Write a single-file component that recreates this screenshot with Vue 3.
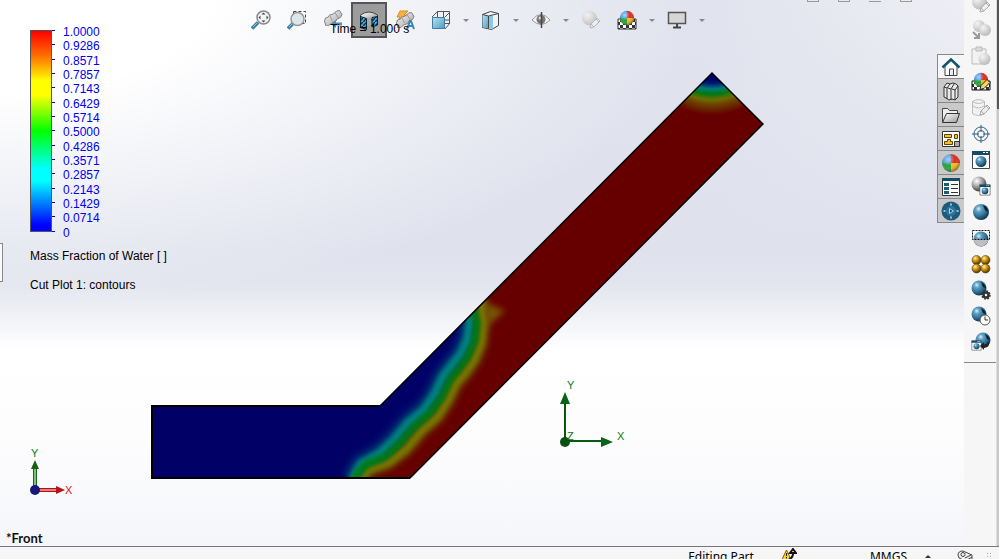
<template>
  <div class="app">
    <svg class="defs" aria-hidden="true">
      <defs>
        <linearGradient id="gSteel" x1="0" y1="0" x2="1" y2="1"><stop offset="0" stop-color="#fff" /><stop offset="1" stop-color="#9a9a9a" /></linearGradient>
        <linearGradient id="gBlue" x1="0" y1="0" x2="1" y2="1"><stop offset="0" stop-color="#b9e2f2" /><stop offset="1" stop-color="#4d9dc0" /></linearGradient>
        <radialGradient id="gBall" cx=".35" cy=".3" r=".75"><stop offset="0" stop-color="#d8f0fa" /><stop offset=".25" stop-color="#5fa0c4" /><stop offset=".65" stop-color="#2b6c92" /><stop offset="1" stop-color="#0c2c40" /></radialGradient>
        <radialGradient id="gGold" cx=".35" cy=".3" r=".75"><stop offset="0" stop-color="#fff3b0" /><stop offset=".4" stop-color="#d29a10" /><stop offset="1" stop-color="#4a2c00" /></radialGradient>
        <radialGradient id="gGrey" cx=".35" cy=".3" r=".8"><stop offset="0" stop-color="#f4f4f4" /><stop offset="1" stop-color="#b4b4b4" /></radialGradient>
        <radialGradient id="gDark" cx=".35" cy=".3" r=".8"><stop offset="0" stop-color="#fff" /><stop offset=".5" stop-color="#999" /><stop offset="1" stop-color="#222" /></radialGradient>
        <radialGradient id="gShine" cx=".35" cy=".3" r=".75"><stop offset="0" stop-color="#fff" stop-opacity=".6" /><stop offset=".5" stop-color="#fff" stop-opacity="0" /><stop offset="1" stop-color="#000" stop-opacity=".5" /></radialGradient>
        <pattern id="hatch" width="4" height="4" patternUnits="userSpaceOnUse"><rect width="4" height="4" fill="#4fa9d2" /><path d="M0 4L4 0" stroke="#063049" stroke-width="1.500" /></pattern>
        <pattern id="check" width="6" height="6" patternUnits="userSpaceOnUse"><rect width="6" height="6" fill="#fff" /><path d="M0 0h3v3H0zM3 3h3v3H3z" fill="#333" /></pattern>
      </defs>

      <symbol id="rgb" viewBox="0 0 20 20">
        <path d="M10 10V1A9 9 0 0 0 1 10z" fill="#3c8be0" /><path d="M10 10V1A9 9 0 0 1 19 10z" fill="#e0281e" />
        <path d="M10 10H1A9 9 0 0 0 10 19z" fill="#26a03a" /><path d="M10 10H19A9 9 0 0 1 10 19z" fill="#f4b91c" />
        <circle cx="10" cy="10" r="9" fill="url(#gShine)" />
      </symbol>
      <symbol id="pencil" viewBox="0 0 12 12">
        <path d="M1 11l1-4 6-6 3 3-6 6zM2 7l3 3M7 2l3 3" fill="#eee" stroke="#aaa" />
      </symbol>
      <symbol id="scope" viewBox="0 0 20 16">
        <path d="M1.500 11l1-3 3-1 1-2 4-1 3-3 3-.5 2.500 4-1.500 3-3.500 1.500-1.500 2.500-4 1.500-2.500 2.500-3 .5z" fill="url(#gSteel)" stroke="#808080" />
        <path d="M6.500 5l3 6M12 2.500l3.500 5.500" stroke="#999" fill="none" />
      </symbol>

      <symbol id="fit" viewBox="0 0 20 20">
        <path d="M1 18.500l6-6" stroke="#3b7fa6" stroke-width="3.500" /><path d="M2 17l4-4" stroke="#8cc4e0" stroke-width="1" />
        <circle cx="12.500" cy="7.500" r="6.500" fill="#f2f4f6" stroke="#8b8b8b" stroke-width="1.500" />
        <path d="M12.500 2.500l2 2h-4zM12.500 12.500l2-2h-4zM7.500 7.500l2-2v4zM17.500 7.500l-2-2v4z" fill="#444" />
      </symbol>
      <symbol id="area" viewBox="0 0 20 20">
        <path d="M6.500 1.500h12v12h-12z" fill="none" stroke="#444" stroke-dasharray="3 2" />
        <path d="M1 18.500l6-6" stroke="#3b7fa6" stroke-width="3.500" /><path d="M2 17l4-4" stroke="#8cc4e0" />
        <circle cx="10.500" cy="9" r="6.500" fill="#dfe6ea" stroke="#999" stroke-width="1.500" />
      </symbol>
      <symbol id="prev" viewBox="0 0 20 20">
        <use href="#scope" width="20" height="16" /><path d="M8 14l5-4v2.500h6v3h-6V18z" fill="#4691b8" />
      </symbol>
      <symbol id="section" viewBox="0 0 20 20">
        <path d="M1.500 7V5q8.500-6 17 0v3l-5 1-2 1H8L7 9z" fill="url(#gSteel)" stroke="#444" />
        <path d="M8 7.500h4v8H8z" fill="#aaa" />
        <path d="M1.500 6.500l6 2v11l-6-2zM18.500 6.500l-5.500 1v9.500l5.500-2z" fill="url(#hatch)" stroke="#0b2233" />
      </symbol>
      <symbol id="flash" viewBox="0 0 20 20">
        <path d="M5 1h8L9 5h3L2 13l3-6H2z" fill="#fbb03b" stroke="#e08a2a" />
        <use href="#scope" x="0" y="2" width="20" height="16" />
        <path d="M12 19l3-8h1l3 8M13.500 16h4" stroke="#3a86b0" stroke-width="2" fill="none" />
      </symbol>
      <symbol id="orient" viewBox="0 0 20 20">
        <path d="M6.500 1.500h12v12h-12zM1 7l6-6M14 7l5-5M14 19l5-6M12.500 1v6M14 10h4" stroke="#555" fill="none" />
        <path d="M1.500 7.500h12v11h-12z" fill="url(#gBlue)" stroke="#3d7e9f" />
      </symbol>
      <symbol id="cube" viewBox="0 0 20 20">
        <path d="M1.500 4.500l8-3 8 2v12l-7 4-9-2z" fill="#edf3f6" stroke="#444" />
        <path d="M1.500 4.500l6 1.500v12.500l-6-1.500z" fill="url(#gBlue)" /><path d="M8 6l4-.500v13l-4 .500z" fill="#8fc8de" /><path d="M1.500 4.500l6 1.500 10-2.500M7.500 6v12.500" stroke="#444" fill="none" />
      </symbol>
      <symbol id="eye" viewBox="0 0 20 20">
        <path d="M1 10q9-11 18 0-9 9-18 0z" fill="#f5f5f5" stroke="#999" /><circle cx="10" cy="9.500" r="4.500" fill="#777" /><circle cx="9" cy="8" r="1.500" fill="#ddd" />
        <path d="M10.500 2v16" stroke="#444" stroke-width="1.500" />
      </symbol>
      <symbol id="editball" viewBox="0 0 20 20">
        <circle cx="8.500" cy="8" r="7.500" fill="url(#gGrey)" /><use href="#pencil" x="8" y="7" width="12" height="12" />
      </symbol>
      <symbol id="scene" viewBox="0 0 20 20">
        <path d="M1 9h18v10H1z" fill="url(#check)" stroke="#333" /><use href="#rgb" x="2" y="0" width="16" height="16" />
      </symbol>
      <symbol id="monitor" viewBox="0 0 20 20">
        <path d="M1.500 2.500h17v11h-17z" fill="#d6d6d6" stroke="#555" stroke-width="1.500" /><path d="M10 14v4M6 17.500h8" stroke="#444" stroke-width="2" />
      </symbol>

      <symbol id="copyball" viewBox="0 0 20 20">
        <circle cx="8" cy="6" r="6" fill="url(#gGrey)" /><circle cx="14" cy="10" r="6" fill="url(#gGrey)" /><path d="M2 12l5 5M8 13v5H3" stroke="#999" stroke-width="2" fill="none" />
      </symbol>
      <symbol id="pasteball" viewBox="0 0 20 20">
        <path d="M1 3h14v15H1z" fill="#f2f2f2" stroke="#bbb" /><path d="M5 1h6v4H5z" fill="#ddd" stroke="#bbb" /><circle cx="13.500" cy="13" r="6" fill="url(#gGrey)" />
      </symbol>
      <symbol id="scenepen" viewBox="0 0 20 20">
        <path d="M1 9h18v9H1z" fill="url(#check)" stroke="#111" /><use href="#rgb" x="2" y="0" width="16" height="16" />
        <path d="M9 17.500l1-4 6-6 3 3-6 6z" fill="#f6d36b" stroke="#222" />
      </symbol>
      <symbol id="dbpen" viewBox="0 0 20 20">
        <path d="M1.500 3.500v12q6 4 12 0v-12q-6-4-12 0 6 4 12 0M2 8q6 4 11 0" fill="#f2f2f2" stroke="#bbb" /><use href="#pencil" x="8" y="6" width="12" height="12" />
      </symbol>
      <symbol id="target" viewBox="0 0 20 20">
        <g fill="none" stroke="#33627f"><circle cx="10" cy="10" r="7" /><circle cx="10" cy="10" r="3.500" /><path d="M10 1v7M10 12v7M1 10h7M12 10h7" /></g>
      </symbol>
      <symbol id="winball" viewBox="0 0 20 20">
        <path d="M1.500 1.500h17v17h-17z" fill="#fff" stroke="#444" /><path d="M1 1h18v4H1z" fill="#174a66" /><path d="M12 2h2v1h-2zM15 2h2v1h-2z" fill="#fff" /><circle cx="10" cy="11.500" r="5.500" fill="url(#gBall)" />
      </symbol>
      <symbol id="greywin" viewBox="0 0 20 20">
        <circle cx="8" cy="8" r="7.500" fill="url(#gDark)" /><use href="#winball" x="8" y="8" width="12" height="12" />
      </symbol>
      <symbol id="ball" viewBox="0 0 20 20">
        <circle cx="10" cy="10" r="8" fill="url(#gBall)" /><path d="M12 3q5 2 5 7l-3-2z" fill="#081c28" />
      </symbol>
      <symbol id="halfball" viewBox="0 0 20 20">
        <circle cx="10" cy="11" r="7.500" fill="url(#gBall)" /><path d="M2.500 11h15q-1 7-7.500 7.500Q3.500 18 2.500 11" fill="#bfbfbf" /><path d="M1.500 2.500h17v9h-17z" fill="none" stroke="#111" stroke-dasharray="2 1" />
      </symbol>
      <symbol id="gold" viewBox="0 0 20 20">
        <g fill="url(#gGold)" stroke="#4a2c00" stroke-width=".5"><circle cx="5.500" cy="6" r="4.500" /><circle cx="14.500" cy="6" r="4.500" /><circle cx="5.500" cy="14.500" r="4.500" /><circle cx="14.500" cy="14.500" r="4.500" /></g>
      </symbol>
      <symbol id="ballgear" viewBox="0 0 20 20">
        <circle cx="8" cy="8" r="7.500" fill="url(#gBall)" /><path d="M10 2q4 2 5 6l-3-1z" fill="#081c28" />
        <circle cx="15" cy="15" r="2.500" fill="#f6f6f6" stroke="#333" stroke-width="2.500" /><circle cx="15" cy="15" r="4" fill="none" stroke="#333" stroke-width="1.500" stroke-dasharray="1.800 1.300" />
      </symbol>
      <symbol id="ballclock" viewBox="0 0 20 20">
        <circle cx="8" cy="8" r="7.500" fill="url(#gBall)" /><path d="M10 2q4 2 5 6l-3-1z" fill="#081c28" />
        <circle cx="14" cy="14" r="5" fill="#fff" stroke="#555" /><path d="M14 10.500V14h3" stroke="#333" fill="none" />
      </symbol>
      <symbol id="ballback" viewBox="0 0 20 20">
        <circle cx="12" cy="8" r="7.500" fill="url(#gBall)" /><path d="M14 2q4 2 5 6l-3-1z" fill="#081c28" />
        <use href="#winball" x="0" y="8" width="11" height="11" /><path d="M9 14l4-4v2.500q4 0 4-4 3 7-4 7.500v2z" fill="#222" />
      </symbol>

      <symbol id="home" viewBox="0 0 20 20">
        <path d="M4 9v9.500h12V9l-6-6z" fill="#fff" stroke="#444" /><path d="M8.500 18v-6h4v6" fill="#eee" stroke="#444" /><path d="M1.500 10.500L10 2.500l8.500 8" fill="none" stroke="#15506e" stroke-width="2.500" />
      </symbol>
      <symbol id="books" viewBox="0 0 20 20">
        <path d="M3 6l3-4 3 1 3-1 3 1 2 2v11l-3 3-3-1-3 1-3-2-2-1z" fill="#e8e8e8" stroke="#333" /><path d="M3 6l3 1v11M6 7l3-4M7 7l3 1v11M10 8l3-5M11 8l3 1v10M14 9l3-4" fill="none" stroke="#333" />
      </symbol>
      <symbol id="folder" viewBox="0 0 20 20">
        <path d="M1.500 17.500v-14h5l2 2h8v4" fill="#eee" stroke="#444" /><path d="M1.500 17.500l4-9h13l-3 9z" fill="url(#gSteel)" stroke="#333" />
      </symbol>
      <symbol id="palette" viewBox="0 0 20 20">
        <path d="M1.500 2.500h17v15h-17z" fill="#fff" stroke="#333" /><path d="M3.500 5.500h7v3h-7zM13.500 5.500h3v4h-3zM6.500 10.500h3v2h2v3h-8v-3h3z" fill="#f6c02c" stroke="#5b4300" /><path d="M13.500 12.500h5v5h-5z" fill="#aaa" stroke="#333" />
      </symbol>
      <symbol id="props" viewBox="0 0 20 20">
        <path d="M1.500 1.500h17v17h-17z" fill="#fff" stroke="#333" /><path d="M1 1h18v3H1z" fill="#174a66" /><path d="M3 6h5v3H3zM3 10h5v3H3zM3 14h5v3H3z" fill="#1d5b7b" /><path d="M10 7.500h7M10 11.500h7M10 15.500h7" stroke="#333" />
      </symbol>
      <symbol id="disc" viewBox="0 0 20 20">
        <circle cx="10" cy="10" r="9.500" fill="#1c5b7d" /><circle cx="10" cy="10" r="5" fill="#2f7397" /><path d="M8.500 7.500l4 2.500-4 2.500z" fill="#1b4e6b" stroke="#a8d2e6" />
        <path d="M9 2.500h2v2H9zM9 15.500h2v2H9zM2.500 9h2v2h-2zM15.500 9h2v2h-2z" fill="#8dc0da" />
      </symbol>
    </svg>

    <main class="viewport">
      <svg class="model" viewBox="0 0 964 546" preserveAspectRatio="xMidYMid meet" role="img" aria-label="Cut plot">
        <defs>
          <clipPath id="body"><path :d="outline" /></clipPath>
          <radialGradient id="tip" gradientUnits="userSpaceOnUse" cx="712" cy="43" r="72">
            <stop offset=".5" stop-color="#000066" /><stop offset=".56" stop-color="#00186e" /><stop offset=".64" stop-color="#007a7a" /><stop offset=".71" stop-color="#007a10" /><stop offset=".79" stop-color="#6f6c00" /><stop offset=".85" stop-color="#6c4400" /><stop offset="1" stop-color="#660000" />
          </radialGradient>
          <filter id="soft6" x="-20%" y="-20%" width="140%" height="140%"><feGaussianBlur stdDeviation="5" /></filter>
          <filter id="soft3" x="-20%" y="-20%" width="140%" height="140%"><feGaussianBlur stdDeviation="3" /></filter>
          <filter id="soft2" x="-20%" y="-20%" width="140%" height="140%"><feGaussianBlur stdDeviation="2" /></filter>
        </defs>
        <g clip-path="url(#body)" fill="none">
          <path :d="outline" fill="#660000" />
          <path d="M650 60h130v60H650z" fill="url(#tip)" />
          <g stroke-linejoin="round">
            <path :d="front + 'L440 260L130 260V520H350z'" fill="#000066" />
            <path d="M478 300L505 311L484 328z" fill="#7a5a00" filter="url(#soft3)" />
            <path :d="warmSide" stroke="#6a4200" stroke-width="14" filter="url(#soft3)" />
            <path :d="coolSide" stroke="#003c72" stroke-width="17" filter="url(#soft6)" />
            <path :d="warmSide" stroke="#7a7400" stroke-width="8" filter="url(#soft2)" />
            <path :d="coolSide" stroke="#008080" stroke-width="9" filter="url(#soft2)" />
            <path :d="front" stroke="#007c08" stroke-width="7" filter="url(#soft2)" />
          </g>
        </g>
        <path :d="outline" fill="none" stroke="#000" stroke-width="1.500" />
        <path d="M380 406H152V478H410" fill="none" stroke="#000" stroke-width="2" />

        <g class="triad">
          <path d="M565 441V402M565 441H604" stroke="#075a10" stroke-width="2" />
          <path d="M565 392l5 12h-10zM613 442l-12-5v10z" fill="#0a6414" /><circle cx="565" cy="442" r="5" fill="#0a5012" />
          <text x="567" y="389">Y</text><text x="617" y="440">X</text><text x="567" y="440">Z</text>
        </g>
        <g class="triad">
          <path d="M35 487v-20" stroke="#176b17" stroke-width="4" /><path d="M35 487v-20" stroke="#7cc07c" stroke-width="2" />
          <path d="M38 490h20" stroke="#a01818" stroke-width="4" /><path d="M38 490h20" stroke="#ee7777" stroke-width="2" />
          <path d="M35 460l4 9h-8z" fill="#126012" /><path d="M65 490l-9-4v8z" fill="#b01616" /><circle cx="35" cy="490" r="5" fill="#16167c" />
          <text x="31" y="457">Y</text><text class="red" x="65" y="494">X</text>
        </g>
      </svg>

      <section class="legend">
        <div class="scale">
          <div class="bar"></div>
          <div class="ticks"><i v-for="v in levels" :key="v"></i></div>
          <ol class="values"><li v-for="v in levels" :key="v">{{ v }}</li></ol>
        </div>
        <p>Mass Fraction of Water [ ]</p>
        <p>Cut Plot 1: contours</p>
      </section>

      <nav class="view-tools" aria-label="View">
        <template v-for="t in viewTools" :key="t.icon">
          <button type="button" class="tool" :class="{ active: t.active, muted: t.muted }" :aria-label="t.label"><svg class="icon"><use :href="'#' + t.icon" /></svg></button>
          <button v-if="t.menu" type="button" class="caret" :aria-label="t.label + ' options'"></button>
        </template>
        <span class="time">Time = 1.000 s</span>
      </nav>

      <nav class="tabs" aria-label="Task pane">
        <button v-for="t in tabs" :key="t.icon" type="button" :aria-label="t.label"><svg class="icon"><use :href="'#' + t.icon" /></svg></button>
      </nav>

      <div class="window-buttons"><i></i><i></i><i class="min"></i><i></i></div>
      <button type="button" class="handle" aria-label="Expand panel"></button>
      <strong class="view-name">*Front</strong>
    </main>

    <aside class="side">
      <div class="side-tools">
        <button v-for="t in sideTools" :key="t.icon" type="button" :aria-label="t.label"><svg class="icon"><use :href="'#' + t.icon" /></svg></button>
      </div>
      <div class="scroll"></div>
    </aside>

    <footer class="status">
      <span class="mode">Editing Part</span>
      <svg class="warn" viewBox="0 0 16 14"><path d="M1 11.500L5.500 2l4.500 9.500z" fill="#ffd21c" stroke="#8a5a00" /><path d="M5.500 5v3M5.500 9v1.500" stroke="#222" /><path d="M8 11q4-1 4-6M9 5l3-4 3 4z" stroke="#111" stroke-width="2" fill="none" /></svg>
      <span class="units">MMGS</span>
      <i class="up"></i>
      <svg class="tag" viewBox="0 0 18 14"><path d="M2 6q0-4 5-4l9 4v4l-4 3-9-4z" fill="#eee" stroke="#444" /><circle cx="7" cy="5.500" r="2" fill="none" stroke="#444" /><path d="M9 9l6-3M11 11l5-3" stroke="#444" /></svg>
      <i class="grip"></i>
    </footer>
  </div>
</template>

<script setup>
const outline = 'M152 406H380L712 73L763 124L410 478H152Z';
// water front and the bands on either side of it, bottom to top
const front = 'M352 484L357 474L367 464L385 457L400 443L415 426L430 413L442 397L450 380L458 370L467 358L475 340L477 323L473 308L466 296';
const coolSide = 'M352 480L361 464L379 454L394 440L408 423L424 410L435 394L443 377L452 365L461 354L468 338L470 322L466 304';
const warmSide = 'M361 482L368 470L388 463L406 449L421 431L437 417L448 400L456 383L465 373L474 360L481 343L483 323L480 298';

const levels = ['1.0000', '0.9286', '0.8571', '0.7857', '0.7143', '0.6429', '0.5714', '0.5000', '0.4286', '0.3571', '0.2857', '0.2143', '0.1429', '0.0714', '0'];

const viewTools = [
  { icon: 'fit', label: 'Zoom to fit' },
  { icon: 'area', label: 'Zoom to area' },
  { icon: 'prev', label: 'Previous view' },
  { icon: 'section', label: 'Section view', active: true },
  { icon: 'flash', label: 'Dynamic annotation views' },
  { icon: 'orient', label: 'View orientation', menu: true },
  { icon: 'cube', label: 'Display style', menu: true },
  { icon: 'eye', label: 'Hide/show items', menu: true },
  { icon: 'editball', label: 'Edit appearance', muted: true },
  { icon: 'scene', label: 'Apply scene', menu: true },
  { icon: 'monitor', label: 'View settings', menu: true },
];

const tabs = [
  { icon: 'home', label: 'Resources' },
  { icon: 'books', label: 'Design library' },
  { icon: 'folder', label: 'File explorer' },
  { icon: 'palette', label: 'View palette' },
  { icon: 'rgb', label: 'Appearances' },
  { icon: 'props', label: 'Custom properties' },
  { icon: 'disc', label: 'Forum' },
];

const sideTools = [
  { icon: 'editball', label: 'Edit appearance' },
  { icon: 'copyball', label: 'Copy appearance' },
  { icon: 'pasteball', label: 'Paste appearance' },
  { icon: 'scenepen', label: 'Edit scene' },
  { icon: 'dbpen', label: 'Edit decal' },
  { icon: 'target', label: 'Align' },
  { icon: 'winball', label: 'Preview window' },
  { icon: 'greywin', label: 'Integrated preview' },
  { icon: 'ball', label: 'Final render' },
  { icon: 'halfball', label: 'Render region' },
  { icon: 'gold', label: 'Proof sheet' },
  { icon: 'ballgear', label: 'Options' },
  { icon: 'ballclock', label: 'Schedule render' },
  { icon: 'ballback', label: 'Recall last render' },
];
</script>

<style>
body { margin: 0; background: #f6f6f6; }
</style>

<style scoped>
.app { display: grid; grid-template-columns: 1fr auto; grid-template-rows: 1fr auto; height: 100vh; overflow: hidden; font-family: "Liberation Sans", Arial, sans-serif; font-size: 12px; color: #000; }
.defs { position: absolute; width: 0; height: 0; }
button { margin: 0; padding: 0; border: 0; background: transparent; display: flex; align-items: center; justify-content: center; }
.icon { width: 20px; height: 20px; display: block; }

.viewport { position: relative; min-height: 0; display: grid; grid-template-columns: 213px 1fr auto; grid-template-rows: 1fr auto; overflow: hidden; background: radial-gradient(ellipse 72% 56% at 0% 0%, #fff 30%, rgba(255, 255, 255, 0) 100%), linear-gradient(to bottom, rgba(223, 226, 237, 0) 0%, #dfe2ed 46%, #e2e5ee 52%, #fff 64%, #fdfdfe 80%, #f5f6fa 100%), linear-gradient(to right, #dfe2ed 55%, #e1e4ee 75%, #eeeff4 100%); }
.model { position: absolute; inset: 0; width: 100%; height: 100%; }
.triad { font-size: 11px; fill: #0a7a14; }
.triad .red { fill: #f01010; }

.legend { position: relative; padding: 25px 0 0 30px; white-space: nowrap; }
.scale { display: flex; height: 215px; color: #0000f0; }
.bar { box-sizing: border-box; width: 22px; margin: 5px 0 8px; border: 1px solid #555; background: linear-gradient(#ff0000, #ff6a00 12%, #ffff00 25%, #ffff00 32%, #00ff00 50%, #00ffff 69%, #00ffff 75%, #0000ff 97%); }
.ticks { display: flex; flex-direction: column; justify-content: space-between; width: 3px; margin: 5px 8px 8px 0; }
.ticks i { height: 1px; background: #0000c0; }
.values { list-style: none; margin: 0; padding: 0; display: flex; flex-direction: column; justify-content: space-between; line-height: 14px; }
.legend p { margin: 9px 0 0; line-height: 14px; }
.legend p + p { margin-top: 15px; }

.view-tools { position: relative; display: flex; align-self: start; padding: 2px 0 0 30px; }
.tool { width: 36px; height: 36px; flex: none; box-sizing: border-box; }
.tool.active { background: #9c9c9c; border: 2px solid #555; }
.tool.muted { opacity: .8; }
.caret { width: 13px; margin-right: 1px; height: 36px; flex: none; }
.caret::after { content: ""; border: 3px solid transparent; border-top-color: #888; border-bottom: 0; }
.time { position: absolute; left: 117px; top: 22px; line-height: 14px; white-space: nowrap; }

.tabs { position: relative; align-self: start; margin-top: 54px; width: 27px; box-sizing: border-box; border: 1px solid #888; border-right: 0; border-bottom: 0; }
.tabs button { width: 100%; height: 24px; background: #c9c9c9; border-bottom: 1px solid #888; box-sizing: border-box; }
.tabs button:first-child { background: #f6f6f6; }

.window-buttons { position: absolute; right: 52px; top: 0; display: flex; gap: 19px; }
.window-buttons i { box-sizing: border-box; width: 12px; height: 2px; border: 1px solid #999; border-top: 0; }
.window-buttons .min { border-width: 0 0 1px; }
.handle { position: absolute; left: 0; top: 243px; width: 3px; height: 39px; box-sizing: border-box; border: 1px solid #888; border-left: 0; background: #fafafa; }
.view-name { position: relative; grid-column: 1 / -1; padding: 0 6px; font: bold 13px/16px Lato, sans-serif; color: #111; }

.side { display: flex; min-height: 0; background: #f6f6f6; overflow: hidden; }
.side-tools { align-self: start; width: 32px; margin: -9px 0 0; padding-bottom: 7px; border-bottom: 1px solid #888; }
.side-tools button { width: 100%; height: 26px; padding-left: 1px; box-sizing: border-box; }
.scroll { width: 2px; background: linear-gradient(#555 0 20%, #c8c8c8 20%); border-left: 1px solid #ddd; }

.status { grid-column: 1 / -1; display: flex; align-items: flex-start; height: 12px; padding-right: 7px; border-top: 1px solid #777; background: #f6f6f6; overflow: hidden; font: 12px/16px "Noto Sans", "Open Sans", sans-serif; }
.status span { padding-top: 2px; }
.mode { margin-left: auto; }
.warn { width: 16px; height: 14px; margin: 1px 73px 0 27px; flex: none; }
.up { margin: 8px 25px 0 18px; border: 3px solid transparent; border-bottom-color: #333; border-top: 0; }
.tag { width: 18px; height: 14px; margin-top: 2px; flex: none; }
.grip { width: 6px; height: 8px; margin: 5px 0 0 12px; background: radial-gradient(#aaa 1px, transparent 1px) 0 0 / 3px 3px; }
</style>
